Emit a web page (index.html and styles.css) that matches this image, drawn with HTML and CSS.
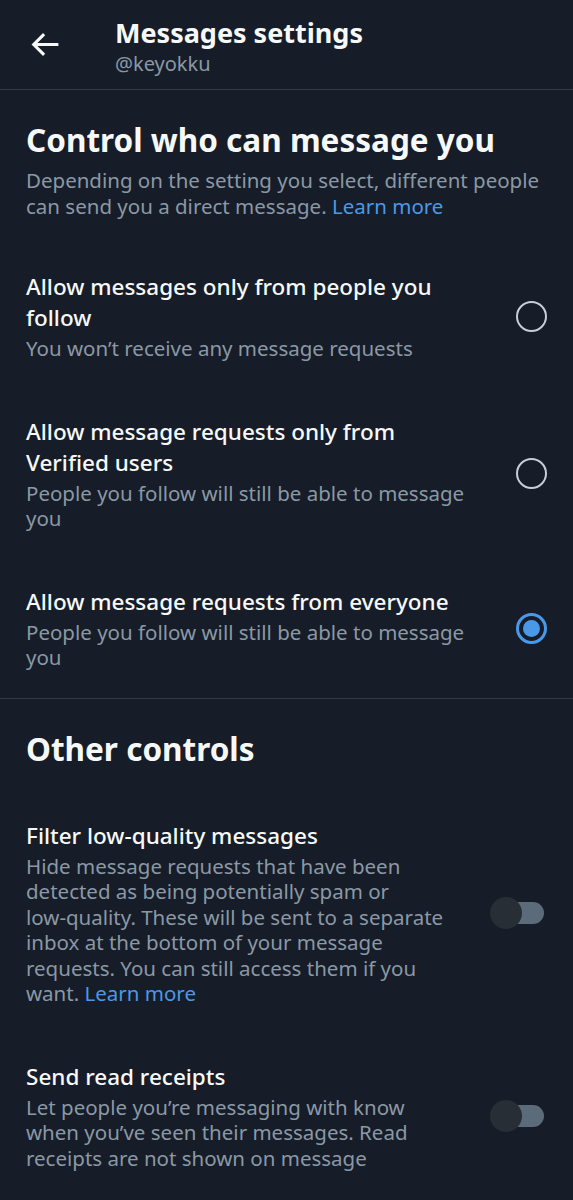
FILE: index.html
```html
<!DOCTYPE html>
<html lang="en">
<head>
    <meta charset="UTF-8">
    <meta name="viewport" content="width=device-width, initial-scale=1.0">
    <title>Messages settings</title>
    <link rel="stylesheet" href="styles.css">
</head>
<body>

    <header class="top-bar">
        <button class="back-btn" aria-label="Back">
            <svg viewBox="0 0 24 24" width="37" height="37">
                <path d="M7.414 13l5.043 5.04-1.414 1.42L3.586 12l7.457-7.46 1.414 1.42L7.414 11H21v2H7.414z" fill="#f7f9f9"/>
            </svg>
        </button>
        <div class="top-titles">
            <h1 class="top-title">Messages settings</h1>
            <p class="top-handle">@keyokku</p>
        </div>
    </header>

    <section class="section">
        <h2 class="section-title">Control who can message you</h2>
        <p class="section-desc">Depending on the setting you select, different people<br>can send you a direct message. <a href="#" class="link">Learn more</a></p>

        <div class="option">
            <div class="option-text">
                <div class="option-title">Allow messages only from people you<br>follow</div>
                <div class="option-sub">You won’t receive any message requests</div>
            </div>
            <span class="radio"></span>
        </div>

        <div class="option">
            <div class="option-text">
                <div class="option-title">Allow message requests only from<br>Verified users</div>
                <div class="option-sub">People you follow will still be able to message<br>you</div>
            </div>
            <span class="radio"></span>
        </div>

        <div class="option">
            <div class="option-text">
                <div class="option-title">Allow message requests from everyone</div>
                <div class="option-sub">People you follow will still be able to message<br>you</div>
            </div>
            <span class="radio checked"></span>
        </div>
    </section>

    <section class="section">
        <h2 class="section-title">Other controls</h2>

        <div class="option toggle-row">
            <div class="option-text">
                <div class="option-title">Filter low-quality messages</div>
                <div class="option-sub">Hide message requests that have been<br>detected as being potentially spam or<br>low-quality. These will be sent to a separate<br>inbox at the bottom of your message<br>requests. You can still access them if you<br>want. <a href="#" class="link">Learn more</a></div>
            </div>
            <span class="toggle"><span class="knob"></span></span>
        </div>

        <div class="option toggle-row">
            <div class="option-text">
                <div class="option-title">Send read receipts</div>
                <div class="option-sub">Let people you’re messaging with know<br>when you’ve seen their messages. Read<br>receipts are not shown on message</div>
            </div>
            <span class="toggle"><span class="knob"></span></span>
        </div>
    </section>

</body>
</html>
```

FILE: styles.css
```css
body {
    margin: 0;
    background-color: #161d28;
    font-family: 'Noto Sans', 'Open Sans', sans-serif;
    color: #f7f9f9;
    height: 1200px;
    overflow: hidden;
}

.top-bar {
    display: flex;
    height: 89px;
    border-bottom: 1px solid #343b45;
}

.back-btn {
    align-self: center;
    background: none;
    border: none;
    padding: 0;
    margin-left: 26px;
    width: 37px;
    height: 37px;
    display: flex;
}

.top-titles {
    margin-left: 52px;
    padding-top: 17px;
}

.top-title {
    margin: 0;
    font-size: 27px;
    line-height: 32px;
    font-weight: 700;
}

.top-handle {
    margin: 2px 0 0;
    font-size: 20px;
    line-height: 26px;
    color: #8b98a5;
}

.section {
    padding-top: 32px;
}

.section + .section {
    border-top: 1px solid #343b45;
}

.section-title {
    margin: 0 26px;
    font-size: 31.5px;
    line-height: 36px;
    font-weight: 700;
}

.section-desc {
    margin: 10px 26px 25px;
    font-size: 20.5px;
    line-height: 25.5px;
    color: #8b98a5;
}

.link {
    color: #4a99e9;
    text-decoration: none;
}

.option {
    display: flex;
    align-items: center;
    padding: 27px 26px;
}

.section .section-title + .option {
    margin-top: 26px;
}

.option-text {
    flex: 1;
    margin-right: 20px;
    white-space: nowrap;
}

.option-title {
    font-size: 22.5px;
    line-height: 31px;
    font-weight: 500;
}

.option-sub {
    margin-top: 3px;
    font-size: 20.5px;
    line-height: 25.5px;
    color: #8b98a5;
}

.radio {
    flex: none;
    width: 27px;
    height: 27px;
    border: 2px solid #c4cfd6;
    border-radius: 50%;
    position: relative;
}

.radio.checked {
    border: 3px solid #4a99e9;
    width: 25px;
    height: 25px;
}

.radio.checked::after {
    content: "";
    position: absolute;
    top: 4px;
    left: 4px;
    width: 17px;
    height: 17px;
    border-radius: 50%;
    background-color: #4a99e9;
}

.toggle-row .option-text {
    margin-right: 0;
}

.toggle {
    flex: none;
    position: relative;
    width: 54px;
    height: 32px;
    margin-right: 3px;
}

.toggle::before {
    content: "";
    position: absolute;
    left: 15px;
    right: 0;
    top: 5px;
    height: 22px;
    border-radius: 11px;
    background-color: #5b6b7a;
}

.knob {
    position: absolute;
    left: 0;
    top: 0;
    width: 32px;
    height: 32px;
    border-radius: 50%;
    background-color: #272e35;
}
```
